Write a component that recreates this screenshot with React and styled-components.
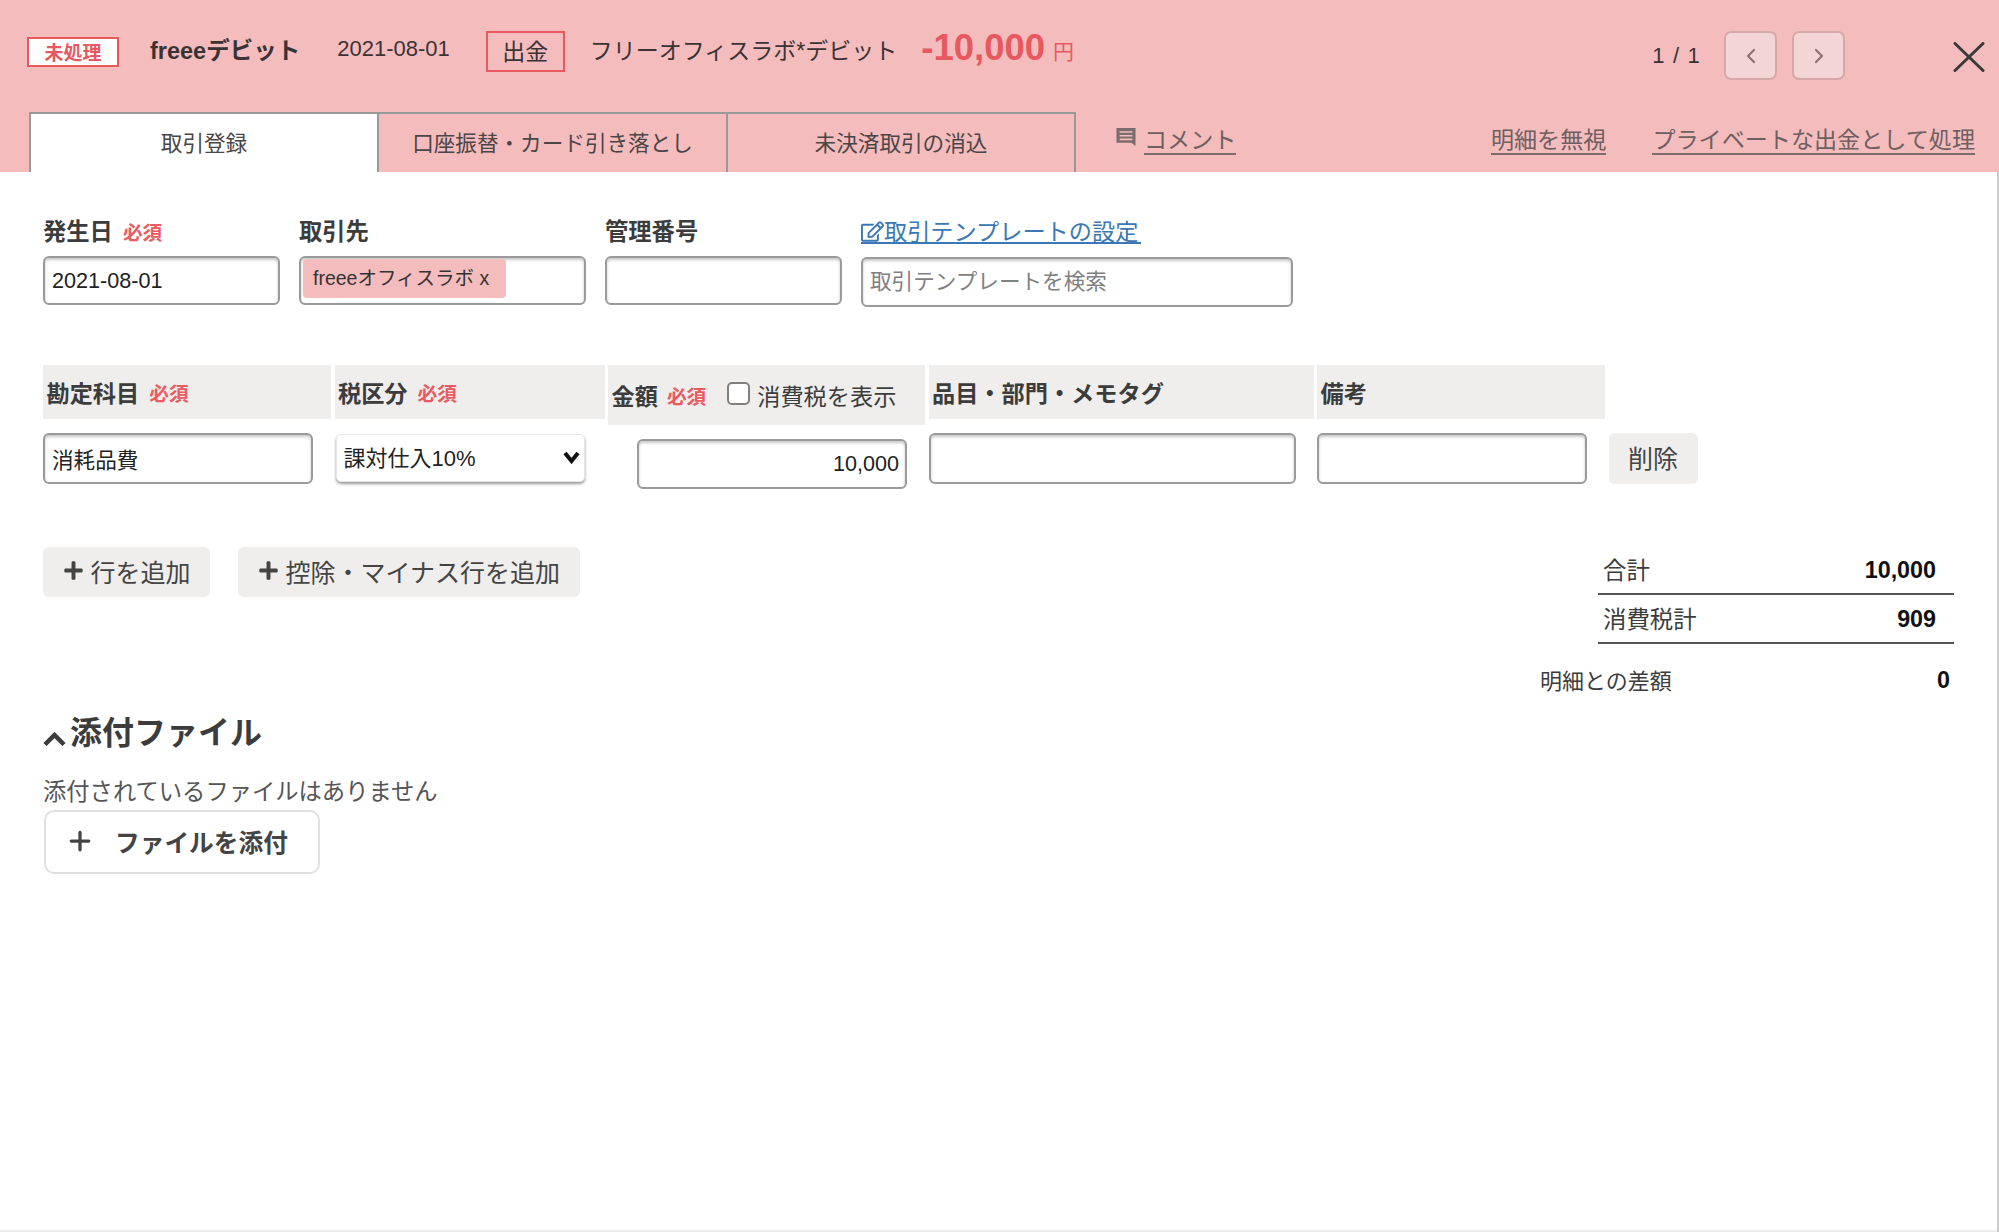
import React from 'react';
import styled, { createGlobalStyle } from 'styled-components';
import { FaPlus, FaRegEdit } from 'react-icons/fa';
import { ChevronLeft, ChevronRight, Plus } from 'lucide-react';

const GlobalStyle = createGlobalStyle`
  html, body {
    margin: 0;
    padding: 0;
    background: #fff;
  }
  * {
    box-sizing: border-box;
  }
  body {
    font-family: "Liberation Sans", "Noto Sans CJK JP", sans-serif;
    color: #3c3c3c;
  }
`;

const Page = styled.div`
  width: 1999px;
  height: 1232px;
  display: flex;
  flex-direction: column;
  overflow: hidden;
`;

const Header = styled.header`
  height: 172px;
  flex: none;
  background: #f5bcbd;
  display: flex;
  flex-direction: column;
`;

const TopRow = styled.div`
  height: 112px;
  display: flex;
  align-items: flex-start;
  padding: 31px 14px 0 27px;
`;

const Statement = styled.div`
  height: 40px;
  display: flex;
  align-items: center;
  font-size: 23px;
  color: #3a3335;
`;

const StatusBadge = styled.span`
  width: 92px;
  height: 30px;
  margin-top: 1px;
  border: 2px solid #e7585f;
  background: #fff;
  color: #e7585f;
  font-size: 19px;
  font-weight: 700;
  display: flex;
  align-items: center;
  justify-content: center;
`;

const CardName = styled.span`
  margin: 0 0 4px 31px;
  font-size: 23.5px;
  font-weight: 700;
`;

const DateText = styled.span`
  margin: 0 0 4px 37px;
  font-size: 22px;
`;

const TypeBox = styled.span`
  width: 79px;
  height: 41px;
  margin-left: 36px;
  padding-bottom: 2px;
  border: 2px solid #e7585f;
  display: flex;
  align-items: center;
  justify-content: center;
`;

const Payee = styled.span`
  margin: 0 0 4px 25px;
`;

const Amount = styled.span`
  margin: 0 0 7px 24px;
  font-size: 36.5px;
  font-weight: 700;
  color: #e7585f;
`;

const Yen = styled.span`
  margin: 0 0 2px 8px;
  font-size: 21px;
  color: #e7585f;
`;

const Pager = styled.div`
  margin-left: auto;
  height: 49px;
  display: flex;
  align-items: center;
`;

const PageCount = styled.span`
  margin-right: 23px;
  font-size: 22px;
  letter-spacing: 1.2px;
  color: #3a3335;
`;

const PageButton = styled.button`
  width: 53px;
  height: 49px;
  margin-right: 15px;
  padding: 0;
  border: 2px solid #d6a8aa;
  border-radius: 7px;
  background: #f4d5d6;
  color: #8d7375;
  display: flex;
  align-items: center;
  justify-content: center;
`;

const CloseButton = styled.button`
  margin: 11px 0 0 93px;
  padding: 0;
  width: 32px;
  height: 30px;
  border: 0;
  background: none;
  color: #3a3a3a;
  display: flex;
`;

const TabRow = styled.div`
  height: 60px;
  padding: 0 24px 0 29px;
  display: flex;
`;

const Tab = styled.div`
  width: ${props => props.$width}px;
  padding-bottom: 4px;
  border: 2px solid #999;
  border-bottom: 0;
  border-left-width: ${props => props.$first ? '2px' : '0'};
  background: ${props => props.$active ? '#fff' : 'transparent'};
  font-size: 21.6px;
  color: #4a4546;
  display: flex;
  align-items: center;
  justify-content: center;
`;

const HeaderLink = styled.a`
  font-size: 23.1px;
  line-height: 28px;
  height: 29px;
  margin-top: 14px;
  color: #6e5f61;
  border-bottom: 2px solid #7c6c6e;
`;

const CommentIcon = styled.svg`
  width: 20px;
  height: 18px;
  margin: 16px 8px 0 40px;
  color: #7c6c6e;
`;

const RightLinks = styled.div`
  margin-left: auto;
  display: flex;
  gap: 46px;
`;

const Body = styled.main`
  flex: 1;
  padding: 0 43px 0 43px;
  border-right: 2px solid #ccc;
  box-shadow: inset 0 -4px 3px -3px #ddd;
`;

const FormRow = styled.div`
  margin-top: 46px;
  display: flex;
  gap: 19px;
`;

const Field = styled.div`
  width: ${props => props.$width}px;
  display: flex;
  flex-direction: column;
  gap: ${props => props.$gap || 10}px;
`;

const Label = styled.label`
  height: 28px;
  font-size: 23.3px;
  line-height: 28px;
  font-weight: 700;
  color: #3c3c3c;
`;

const Required = styled.span`
  margin-left: ${props => props.$gap || 10}px;
  font-size: 19.7px;
  font-weight: 700;
  color: #ea5a60;
`;

const TextInput = styled.input`
  display: block;
  width: ${props => props.$width ? props.$width + 'px' : '100%'};
  height: ${props => props.$height || 49}px;
  margin: ${props => props.$margin || '0'};
  padding: 0 6px 0 7px;
  border: 2px solid #9a9a9a;
  border-radius: 6px;
  box-shadow: inset 0 2px 3px rgba(0, 0, 0, 0.22);
  background: #fff;
  font-family: inherit;
  font-size: 21.6px;
  color: #222;
  text-align: ${props => props.$align || 'left'};
  outline: none;

  &::placeholder {
    color: #808080;
  }
`;

const TagBox = styled.div`
  height: 49px;
  padding: 1px 2px;
  border: 2px solid #9a9a9a;
  border-radius: 6px;
  box-shadow: inset 0 2px 3px rgba(0, 0, 0, 0.22);
  display: flex;
  align-items: flex-start;
`;

const Tag = styled.span`
  width: 203px;
  height: 39px;
  padding: 0 0 4px 10px;
  border-radius: 4px;
  background: #f5bcbd;
  font-size: 19.5px;
  color: #333;
  display: flex;
  align-items: center;
`;

const BlueLink = styled.a`
  height: 26px;
  padding-top: 3px;
  font-size: 23.2px;
  line-height: 22px;
  color: #3a78b5;
  border-bottom: 2px solid #3a78b5;
  width: 280px;
  display: flex;
  align-items: center;
`;

const LineGrid = styled.div`
  margin-top: 58px;
  display: grid;
  grid-template-columns: 288px 270px 317px 385px 288px 89px;
  grid-template-rows: 60px auto;
  column-gap: 3.5px;
  row-gap: 8px;
`;

const HeadCell = styled.div`
  height: ${props => props.$tall ? 60 : 54}px;
  padding-left: 3.5px;
  background: #efeeed;
  font-size: 23.2px;
  font-weight: 700;
  color: #3c3c3c;
  display: flex;
  align-items: center;
`;

const TaxToggle = styled.label`
  margin-left: 21px;
  font-weight: 400;
  display: flex;
  align-items: center;
  gap: 7px;
`;

const CheckBox = styled.input`
  appearance: none;
  width: 23px;
  height: 23px;
  margin: 0 0 4px;
  border: 2px solid #808080;
  border-radius: 5px;
  background: #fff;
`;

const SelectWrap = styled.div`
  position: relative;
  width: 249px;
  height: 48px;
  margin: 1px 0 0 1px;
`;

const TaxSelect = styled.select`
  appearance: none;
  width: 100%;
  height: 100%;
  padding: 0 7px;
  border: 1px solid #e6e6e6;
  border-radius: 5px;
  box-shadow: 0 2px 3px rgba(0, 0, 0, 0.4);
  background: #fff;
  font-family: inherit;
  font-size: 22px;
  color: #222;
`;

const SelectArrow = styled.svg`
  position: absolute;
  right: 5px;
  top: 17px;
  width: 17px;
  height: 13px;
  pointer-events: none;
`;

const GrayButton = styled.button`
  height: ${props => props.$height || 50}px;
  padding: 0 ${props => props.$pad ?? 19.5}px 3px;
  border: 0;
  border-radius: 6px;
  background: #efeeed;
  font-family: inherit;
  font-size: 25px;
  color: #444;
  white-space: nowrap;
  display: flex;
  align-items: center;
  justify-content: center;
  gap: 7px;
`;

const ActionRow = styled.div`
  margin-top: 58px;
  display: flex;
  align-items: flex-start;
`;

const Actions = styled.div`
  display: flex;
  gap: 28px;
`;

const Summary = styled.div`
  margin-left: auto;
  margin-right: 0;
  display: flex;
  flex-direction: column;
  align-items: flex-end;
`;

const SumRow = styled.div`
  width: 356px;
  height: ${props => props.$first ? 48 : 49}px;
  padding: 0 18px 2px 5px;
  border-bottom: 2px solid #555;
  font-size: 23.4px;
  display: flex;
  align-items: center;
  justify-content: space-between;
`;

const DiffRow = styled.div`
  width: 410px;
  margin: 20px 4px 0 0;
  height: 30px;
  font-size: 22px;
  display: flex;
  align-items: center;
  justify-content: space-between;
`;

const Figure = styled.strong`
  margin-top: 3px;
  font-size: 23.3px;
  color: #111;
`;

const AttachTitle = styled.h2`
  margin: 19px 0 0;
  height: 40px;
  font-size: 32px;
  line-height: 40px;
  font-weight: 700;
  color: #3c3c3c;
  display: flex;
  align-items: center;
  gap: 4px;
`;

const TitleChevron = styled.svg`
  width: 23px;
  height: 14px;
  margin-top: 12px;
`;

const EmptyNote = styled.p`
  margin: 22px 0 0;
  height: 34px;
  font-size: 23.3px;
  line-height: 34px;
  color: #555;
`;

const AttachButton = styled.button`
  width: 276px;
  height: 64px;
  margin: 1px 0 0 1px;
  padding: 0 0 2px 19px;
  border: 2px solid #e0e0e0;
  border-radius: 10px;
  background: #fff;
  font-family: inherit;
  font-size: 24.7px;
  font-weight: 700;
  color: #444;
  display: flex;
  align-items: center;
  gap: 20px;
`;

export default function App() {
  return (
    <Page>
      <GlobalStyle />
      <Header>
        <TopRow>
          <Statement>
            <StatusBadge>未処理</StatusBadge>
            <CardName>freeeデビット</CardName>
            <DateText>2021-08-01</DateText>
            <TypeBox>出金</TypeBox>
            <Payee>フリーオフィスラボ*デビット</Payee>
            <Amount>-10,000</Amount>
            <Yen>円</Yen>
          </Statement>
          <Pager>
            <PageCount>1 / 1</PageCount>
            <PageButton><ChevronLeft size={24} strokeWidth={2.2} /></PageButton>
            <PageButton><ChevronRight size={24} strokeWidth={2.2} /></PageButton>
          </Pager>
          <CloseButton>
            <svg width="32" height="30" viewBox="0 0 32 30" fill="none" stroke="currentColor" strokeWidth="3" strokeLinecap="round">
              <line x1="2" y1="1.5" x2="30" y2="28.5" />
              <line x1="30" y1="1.5" x2="2" y2="28.5" />
            </svg>
          </CloseButton>
        </TopRow>
        <TabRow>
          <Tab $first $active $width={350}>取引登録</Tab>
          <Tab $width={349}>口座振替・カード引き落とし</Tab>
          <Tab $width={348}>未決済取引の消込</Tab>
          <CommentIcon viewBox="1 1 18 17">
            <path fill="currentColor" fillRule="evenodd" d="M1 1h18v17l-4-3H1z M4 4v1.5h12V4z M4 7.5v1.5h12V7.5z M4 11v1.5h12V11z" />
          </CommentIcon>
          <HeaderLink>コメント</HeaderLink>
          <RightLinks>
            <HeaderLink>明細を無視</HeaderLink>
            <HeaderLink>プライベートな出金として処理</HeaderLink>
          </RightLinks>
        </TabRow>
      </Header>
      <Body>
        <FormRow>
          <Field $width={237}>
            <Label>発生日<Required>必須</Required></Label>
            <TextInput defaultValue="2021-08-01" />
          </Field>
          <Field $width={287}>
            <Label>取引先</Label>
            <TagBox><Tag>freeeオフィスラボ&nbsp;x</Tag></TagBox>
          </Field>
          <Field $width={237}>
            <Label>管理番号</Label>
            <TextInput />
          </Field>
          <Field $width={432} $gap={13}>
            <BlueLink><FaRegEdit size={23} />取引テンプレートの設定</BlueLink>
            <TextInput placeholder="取引テンプレートを検索" $height={50} />
          </Field>
        </FormRow>
        <LineGrid>
          <HeadCell>勘定科目<Required $gap={10}>必須</Required></HeadCell>
          <HeadCell>税区分<Required $gap={10}>必須</Required></HeadCell>
          <HeadCell $tall>
            金額<Required $gap={9}>必須</Required>
            <TaxToggle><CheckBox type="checkbox" />消費税を表示</TaxToggle>
          </HeadCell>
          <HeadCell>品目・部門・メモタグ</HeadCell>
          <HeadCell>備考</HeadCell>
          <div />
          <TextInput defaultValue="消耗品費" $width={270} $height={51} />
          <SelectWrap>
            <TaxSelect defaultValue="課対仕入10%">
              <option>課対仕入10%</option>
            </TaxSelect>
            <SelectArrow viewBox="0 0 17 13" fill="none" stroke="#111" strokeWidth="4">
              <polyline points="2,2 8.5,10 15,2" />
            </SelectArrow>
          </SelectWrap>
          <TextInput defaultValue="10,000" $align="right" $width={270} $height={50} $margin="6px 0 0 29px" />
          <TextInput $width={367} $height={51} />
          <TextInput $width={270} $height={51} />
          <GrayButton $height={51} $pad={0}>削除</GrayButton>
        </LineGrid>
        <ActionRow>
          <Actions>
            <GrayButton><FaPlus size={21} />行を追加</GrayButton>
            <GrayButton><FaPlus size={21} />控除・マイナス行を追加</GrayButton>
          </Actions>
          <Summary>
            <SumRow $first>合計<Figure>10,000</Figure></SumRow>
            <SumRow>消費税計<Figure>909</Figure></SumRow>
            <DiffRow>明細との差額<Figure>0</Figure></DiffRow>
          </Summary>
        </ActionRow>
        <AttachTitle>
          <TitleChevron viewBox="0 0 23 14" fill="none" stroke="#3c3c3c" strokeWidth="4.5">
            <polyline points="2,12.5 11.5,3 21,12.5" />
          </TitleChevron>
          添付ファイル
        </AttachTitle>
        <EmptyNote>添付されているファイルはありません</EmptyNote>
        <AttachButton><Plus size={30} strokeWidth={2.6} />ファイルを添付</AttachButton>
      </Body>
    </Page>
  );
}
